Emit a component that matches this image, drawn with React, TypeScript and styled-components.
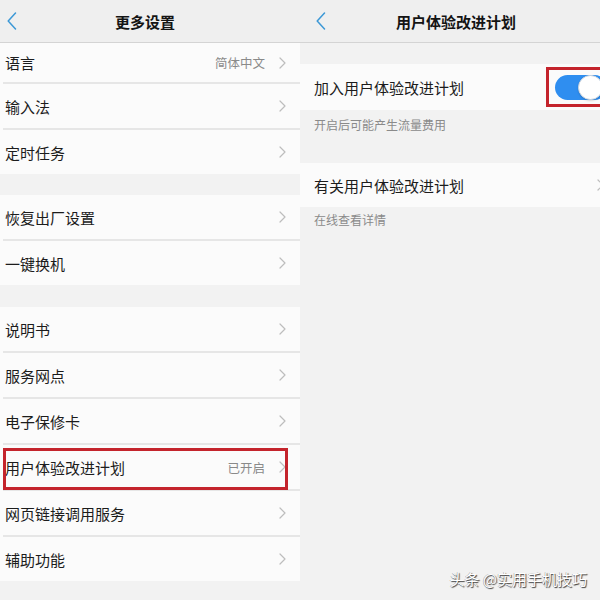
import React from "react";
import styled, { createGlobalStyle } from "styled-components";

const GlobalStyle = createGlobalStyle`
  html, body { margin: 0; padding: 0; background: #f2f2f2; }
  body { font-family: "Noto Sans CJK SC", "Noto Sans", sans-serif; }
  * { box-sizing: border-box; }
`;

const Screen = styled.div`
  position: relative;
  width: 600px;
  height: 600px;
  display: grid;
  grid-template-columns: 300px 300px;
  overflow: hidden;
  background: #f2f2f2;
`;

const Panel = styled.div`
  height: 600px;
  overflow: hidden;
  background: #f2f2f2;
`;

const PanelInner = styled.div<{ $w: number }>`
  width: ${(p) => p.$w}px;
  display: flex;
  flex-direction: column;
`;

const Header = styled.div`
  height: 43px;
  display: grid;
  grid-template-columns: 40px 1fr 40px;
  align-items: center;
  background: #efefef;
  border-bottom: 1px solid #d4d4d4;
`;

const Back = styled.div<{ $left: number }>`
  padding-left: ${(p) => p.$left}px;
  display: flex;
  align-items: center;
  height: 100%;
`;

const Title = styled.div<{ $shift: number }>`
  text-align: center;
  font-size: 15px;
  font-weight: 600;
  color: #141414;
  transform: translateX(${(p) => p.$shift}px);
`;

const Group = styled.div<{ $gap: number }>`
  margin-top: ${(p) => p.$gap}px;
  background: #fbfbfb;
  display: flex;
  flex-direction: column;
`;

const Row = styled.div<{ $h?: number; $pl: number; $pr: number }>`
  position: relative;
  height: ${(p) => p.$h ?? 44}px;
  display: flex;
  align-items: center;
  padding: 0 ${(p) => p.$pr}px 0 ${(p) => p.$pl}px;
`;

const Label = styled.div`
  flex: 1;
  font-size: 15px;
  color: #1c1c1c;
  white-space: nowrap;
`;

const Value = styled.div`
  font-size: 12.5px;
  color: #8a8a8a;
  margin-right: 14px;
`;

const Divider = styled.div`
  height: 2px;
  margin-left: 3px;
  background: #e6e6e6;
`;

const Caption = styled.div<{ $pt: number; $h: number }>`
  height: ${(p) => p.$h}px;
  padding: ${(p) => p.$pt}px 0 0 14px;
  font-size: 12px;
  color: #8a8a8a;
`;

const RedBox = styled.div<{ $top: number; $left: number; $right: number; $bottom: number }>`
  position: absolute;
  top: ${(p) => p.$top}px;
  left: ${(p) => p.$left}px;
  right: ${(p) => p.$right}px;
  bottom: ${(p) => p.$bottom}px;
  border: 3px solid #c4242c;
  pointer-events: none;
`;

const Switch = styled.div`
  position: relative;
  width: 52px;
  height: 25px;
  border-radius: 13px;
  background: #2f8ef0;
`;

const Knob = styled.div`
  position: absolute;
  right: 4px;
  top: 0px;
  width: 25px;
  height: 25px;
  border-radius: 50%;
  background: #ffffff;
  border: 1px solid #cfd6de;
  box-shadow: 0 1px 2px rgba(0, 0, 0, 0.15);
`;

const Watermark = styled.div`
  position: absolute;
  right: 13px;
  bottom: 11px;
  font-size: 15px;
  color: #ffffff;
  text-shadow: 1px 1px 1px rgba(0, 0, 0, 0.75), -0.5px -0.5px 0.5px rgba(0, 0, 0, 0.4);
  white-space: nowrap;
`;

const BackIcon = () => (
  <svg width="10" height="18" viewBox="0 0 10 18">
    <polyline points="8.5,1 1.2,9 8.5,17" fill="none" stroke="#3c98d6" strokeWidth="1.5" strokeLinecap="round" strokeLinejoin="round" />
  </svg>
);

const Chevron = () => (
  <svg width="7" height="12" viewBox="0 0 7 12">
    <polyline points="1,1 6,6 1,11" fill="none" stroke="#bdbdbd" strokeWidth="1.2" strokeLinecap="round" strokeLinejoin="round" />
  </svg>
);

type Item = { label: string; value?: string; boxed?: boolean; h?: number };

const groups: { gap: number; items: Item[] }[] = [
  { gap: 0, items: [{ label: "语言", value: "简体中文", h: 39 }, { label: "输入法" }, { label: "定时任务" }] },
  { gap: 21, items: [{ label: "恢复出厂设置" }, { label: "一键换机" }] },
  {
    gap: 22,
    items: [
      { label: "说明书" },
      { label: "服务网点" },
      { label: "电子保修卡" },
      { label: "用户体验改进计划", value: "已开启", boxed: true },
      { label: "网页链接调用服务" },
      { label: "辅助功能" },
    ],
  },
];

export default function App() {
  return (
    <>
      <GlobalStyle />
      <Screen>
        <Panel>
          <PanelInner $w={300}>
            <Header>
              <Back $left={7}>
                <BackIcon />
              </Back>
              <Title $shift={-5}>更多设置</Title>
              <div />
            </Header>
            {groups.map((g, gi) => (
              <Group key={gi} $gap={g.gap}>
                {g.items.map((it, i) => (
                  <React.Fragment key={it.label}>
                    {i > 0 && <Divider />}
                    <Row $h={it.h} $pl={5} $pr={14}>
                      <Label>{it.label}</Label>
                      {it.value && <Value>{it.value}</Value>}
                      <Chevron />
                      {it.boxed && <RedBox $top={3} $left={3} $right={12} $bottom={-1} />}
                    </Row>
                  </React.Fragment>
                ))}
              </Group>
            ))}
          </PanelInner>
        </Panel>
        <Panel>
          <PanelInner $w={312}>
            <Header>
              <Back $left={16}>
                <BackIcon />
              </Back>
              <Title $shift={0}>用户体验改进计划</Title>
              <div />
            </Header>
            <Group $gap={21}>
              <Row $h={46} $pl={14} $pr={5}>
                <Label>加入用户体验改进计划</Label>
                <Switch>
                  <Knob />
                </Switch>
                <RedBox $top={3} $left={246} $right={-10} $bottom={3} />
              </Row>
            </Group>
            <Caption $pt={6} $h={53}>开启后可能产生流量费用</Caption>
            <Group $gap={0}>
              <Row $h={44} $pl={14} $pr={8}>
                <Label>有关用户体验改进计划</Label>
                <Chevron />
              </Row>
            </Group>
            <Caption $pt={4} $h={30}>在线查看详情</Caption>
          </PanelInner>
        </Panel>
        <Watermark>头条 @实用手机技巧</Watermark>
      </Screen>
    </>
  );
}
